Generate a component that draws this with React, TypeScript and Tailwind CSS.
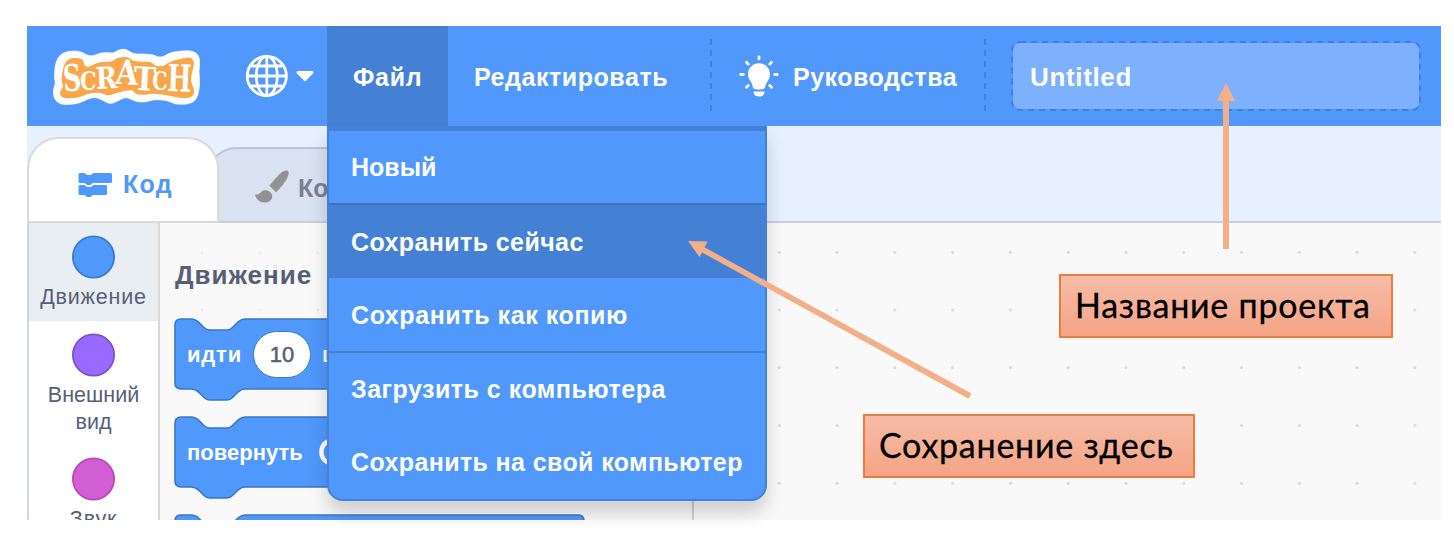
import React from "react";

const LETTERS = [
  { c: "S", x: 131, y: 209, w: 0.68, size: 110, r: -3 },
  { c: "C", x: 180, y: 205, w: 0.78, size: 80, r: 0 },
  { c: "R", x: 229, y: 202, w: 0.86, size: 90, r: -3 },
  { c: "A", x: 286, y: 186, w: 0.85, size: 102, r: 3 },
  { c: "T", x: 339, y: 204, w: 0.92, size: 98, r: 3 },
  { c: "C", x: 397, y: 205, w: 0.76, size: 76, r: 0 },
  { c: "H", x: 441, y: 208, w: 0.68, size: 112, r: 2 },
];

const OUTER: [number, number][] = [
  [104, 150], [107, 122], [120, 98], [145, 88], [180, 88], [200, 100], [218, 104], [238, 94], [262, 92], [280, 95],
  [294, 85], [315, 81], [332, 92], [345, 97], [395, 97], [412, 106], [430, 106], [450, 92], [490, 87], [520, 87],
  [537, 102], [540, 125], [536, 150], [540, 175], [537, 208], [528, 236], [505, 248], [465, 248], [447, 238], [420, 234],
  [400, 234], [375, 242], [345, 240], [322, 226], [303, 232], [283, 244], [265, 246], [247, 235], [225, 226], [203, 232],
  [180, 244], [150, 249], [120, 248], [102, 232], [99, 205], [107, 185], [103, 170],
];

const INNER: [number, number][] = [
  [127, 165], [133, 130], [145, 114], [165, 110], [188, 114], [190, 133], [205, 139], [225, 129], [245, 122], [278, 122],
  [288, 112], [310, 107], [330, 111], [338, 122], [392, 121], [405, 135], [432, 136], [450, 121], [480, 115], [508, 107],
  [521, 118], [517, 145], [510, 165], [513, 190], [523, 205], [516, 226], [480, 228], [450, 220], [420, 216], [395, 213],
  [375, 218], [348, 216], [338, 202], [310, 207], [285, 213], [265, 221], [245, 212], [225, 211], [200, 215], [180, 225],
  [155, 228], [126, 227], [120, 210], [133, 195], [127, 180],
];

function smooth(points: [number, number][]) {
  const n = points.length;
  const mid = (i: number) => {
    const a = points[i % n];
    const b = points[(i + 1) % n];
    return `${(a[0] + b[0]) / 2} ${(a[1] + b[1]) / 2}`;
  };
  return `M${mid(0)}` + points.map((_, i) => `Q${points[(i + 1) % n].join(" ")} ${mid(i + 1)}`).join("") + "z";
}

function Logo() {
  return (
    <svg className="ml-[26px] h-[57px] w-[147px] shrink-0" viewBox="99 79 441 171">
      <path fill="#fff" stroke="#fff" strokeWidth="2" d={smooth(OUTER)} />
      <path fill="#f9a74a" stroke="#f9a74a" strokeWidth="4" d={smooth(INNER)} />
      {LETTERS.map((l, i) => (
        <text
          key={i}
          transform={`translate(${l.x} ${l.y}) rotate(${l.r}) scale(${l.w} 1)`}
          fontFamily="'DejaVu Serif', serif"
          fontSize={l.size}
          fill="#fff"
        >
          {l.c}
        </text>
      ))}
    </svg>
  );
}

function Globe() {
  return (
    <svg className="ml-[45px] h-[43px] w-[43px] shrink-0" viewBox="0 0 43 43" fill="none" stroke="#fff" strokeWidth="2.800">
      <circle cx="21.800" cy="21" r="19.600" />
      <ellipse cx="21.800" cy="21" rx="10.500" ry="19.600" />
      <path d="M21.800 1.500v39M2 21h39M5.500 11h32M5.500 31h32" />
    </svg>
  );
}

function Bulb() {
  return (
    <svg className="h-[42px] w-[40px] shrink-0" viewBox="0 0 40 42" fill="#fff">
      <path d="M20 8.300c-6.200 0-11 4.800-11 10.900 0 3.800 1.900 6.200 3.500 8.700 1.400 2.300 1.100 4.600 2.200 5.700.9.900 2 .9 5.300.9s4.400 0 5.300-.9c1.100-1.100.8-3.400 2.200-5.700 1.600-2.500 3.500-4.900 3.500-8.700 0-6.100-4.800-10.900-11-10.900z" />
      <path d="M14.500 36.500h11c.3 3-1.800 5-5.500 5s-5.800-2-5.500-5z" />
      <path stroke="#fff" strokeWidth="2.800" strokeLinecap="round" d="M20 2v2M7.500 7.300l1.700 1.800M32.500 7.300l-1.700 1.800M1.800 19.500h2.500M35.700 19.500h2.500M7.500 32.200l1.700-1.700M32.500 32.200l-1.700-1.700" />
    </svg>
  );
}

function Divider() {
  return (
    <svg className="h-[74px] w-[2px] shrink-0" viewBox="0 0 2 74">
      <path d="M1 0v74" stroke="#4481d5" strokeWidth="2" strokeDasharray="6 5" />
    </svg>
  );
}

function Header() {
  return (
    <header className="flex h-[100px] shrink-0 items-center bg-[#5098fc] text-[25px] font-bold text-white">
      <Logo />
      <Globe />
      <svg className="ml-[7px] h-[12px] w-[20px] shrink-0" viewBox="0 0 20 12">
        <path d="M3 2.500h14l-7 7z" fill="#fff" stroke="#fff" strokeWidth="3" strokeLinejoin="round" />
      </svg>
      <div className="ml-[12px] flex h-full w-[121px] shrink-0 items-center bg-[#4481d5] pt-[4px] pl-[26px]">
        <span className="tracking-[0.7px]">Файл</span>
      </div>
      <div className="flex w-[262px] shrink-0 items-center pt-[4px] pl-[26px] tracking-[0.55px]">Редактировать</div>
      <Divider />
      <div className="flex w-[272px] shrink-0 items-center pl-[27px]">
        <Bulb />
        <span className="pt-[4px] pl-[14px] tracking-[0.5px]">Руководства</span>
      </div>
      <Divider />
      <div className="relative ml-[25px] flex h-[70px] w-[410px] shrink-0 items-center pt-[3px] pl-[19px] text-[26px] tracking-[0.65px]">
        <svg className="absolute inset-0 h-[70px] w-[410px]" viewBox="0 0 410 70">
          <rect x="1" y="1" width="408" height="68" rx="8" fill="#7db1fd" stroke="#5098fc" strokeWidth="2" />
          <rect x="1" y="1" width="408" height="68" rx="8" fill="none" stroke="#4481d5" strokeWidth="2" strokeDasharray="6 5" />
        </svg>
        <span className="relative">Untitled</span>
      </div>
    </header>
  );
}

function Tabs() {
  return (
    <div className="flex h-[97px] shrink-0 items-end border-b-2 border-[#c6cfde] bg-[#e6f0ff]">
      <div className="relative z-10 -mb-[2px] flex h-[86px] w-[192px] shrink-0 items-center rounded-t-[32px] border-2 border-[#dadada] bg-white pt-[9px] pl-[49px] text-[#5098fc]">
        <svg className="h-[26px] w-[35px]" viewBox="0 0 35 26" fill="#5098fc">
          <path d="M2 1h4c1.500 0 2 2 4 2h2c2 0 2.500-2 4-2h16.500q1.500 0 1.500 1.500v7q0 1.500-1.500 1.500H15.500c-1.500 0-2 2-4 2H10c-2 0-2.500-2-4-2H2q-1.500 0-1.500-1.500v-7Q.5 1 2 1z" />
          <path d="M2 13h4c1.500 0 2 2 4 2h2c2 0 2.500-2 4-2h11.500q1.500 0 1.500 1.500v7q0 1.500-1.500 1.500H15.500c-1.500 0-2 2-4 2H10c-2 0-2.500-2-4-2H2q-1.500 0-1.500-1.500v-7Q.5 13 2 13z" />
        </svg>
        <span className="pl-[10px] text-[25px] font-bold tracking-[1.3px]">Код</span>
      </div>
      <div className="-ml-[14px] flex h-[74px] w-[240px] shrink-0 items-center rounded-t-[32px] border-2 border-b-0 border-[#b9c4d6] bg-[#d9e2f1] pt-[5px] pl-[47px] text-[#7a8092]">
        <svg className="-mt-[3px] h-[35px] w-[36px]" viewBox="0 0 36 35" fill="#929292">
          <path d="M34 2c1.800 1.500 0 6-2.500 10-3 4.800-7 9-9.500 11.200l-6.500-6.500C18 13.500 23.500 6.500 27.500 3.500 30.500 1.500 33 1 34 2z" />
          <path d="M9.500 21.500c4-1.300 8.500 1.500 8.700 5.700.2 4.500-4.500 6.800-8.700 6.300C5.500 33 2.500 30 1.300 26.700c-.3-1.200.5-1.500 1.500-1.200 2.700.7 3-2.700 6.700-4z" />
        </svg>
        <span className="pt-[2px] pl-[8px] text-[25px] font-bold">Ко</span>
      </div>
    </div>
  );
}

type CategoryProps = { fill: string; stroke: string; children: React.ReactNode; className: string };

function Category({ fill, stroke, children, className }: CategoryProps) {
  return (
    <div className={`flex flex-col items-center text-center text-[21.5px] leading-[27px] ${className}`}>
      <svg className="h-[44px] w-[44px] shrink-0" viewBox="0 0 44 44">
        <circle cx="21.500" cy="22" r="20.600" fill={fill} stroke={stroke} strokeWidth="1.800" />
      </svg>
      <span className="mt-[5px]">{children}</span>
    </div>
  );
}

function Block({ width, children }: { width: number; children?: React.ReactNode }) {
  const w = width - 1;
  return (
    <div className="relative flex h-[98px] shrink-0 items-start">
      <svg className="absolute top-0 left-0 overflow-visible" width={width} height="84">
        <path
          d={`M1 7q0-6 6-6H17c4 0 6 1.500 8 3.500l5 5q2.500 2.500 5.500 2.500H53q3 0 5.500-2.500l5-5C66 2.500 67 1 71 1H${w - 6}q6 0 6 6V65q0 6-6 6H71c-4 0-5 1.500-7.500 3.500l-5 5q-2.500 2.500-5.500 2.500H35.500q-3 0-5.500-2.500l-5-5C23 72.500 21 71 17 71H7q-6 0-6-6z`}
          fill="#5098fc"
          stroke="#3a76c6"
          strokeWidth="1.600"
        />
      </svg>
      <div className="relative flex h-[72px] items-center pl-[13px] text-[22px] font-bold whitespace-nowrap text-white">{children}</div>
    </div>
  );
}

function Flyout() {
  return (
    <div className="relative w-[534px] shrink-0 border-r-2 border-[#cfcfcf] bg-[#f9f9f9] pl-[14px]">
      <svg className="absolute top-0 left-0 h-full w-full">
        {[42, 100, 158].map((x) => [30, 87].map((y) => <circle key={`${x}-${y}`} cx={x} cy={y} r="1.300" fill="#ececec" />))}
      </svg>
      <div className="relative flex h-[95px] items-center pt-[9px] pl-px text-[26px] font-bold tracking-[1px]">Движение</div>
      <Block width={340}>
        <span className="tracking-[0.8px]">идти</span>
        <span className="mx-[11px] flex h-[47px] w-[58px] items-center justify-center rounded-full border border-[#3a76c6] bg-white font-medium text-[#575e75] [-webkit-text-stroke:0.5px_#575e75]">
          10
        </span>
        <span>шагов</span>
      </Block>
      <Block width={430}>
        <span>повернуть</span>
        <svg className="ml-[14px] h-[32px] w-[32px]" viewBox="0 0 32 32" fill="none" stroke="#fff" strokeWidth="4.500">
          <path d="M16 28a12 12 0 1 1 12-9" />
        </svg>
      </Block>
      <Block width={411} />
    </div>
  );
}

function Workspace() {
  const xs = Array.from({ length: 12 }, (_, i) => 85.3 + i * 57.78);
  const ys = [29.3, 87, 144.7, 202.5, 260.3];
  return (
    <div className="grow bg-[#f9f9f9]">
      <svg className="h-full w-full">
        {xs.map((x) => ys.map((y) => <circle key={`${x}-${y}`} cx={x} cy={y} r="1.600" fill="#dcdcdc" />))}
      </svg>
    </div>
  );
}

function FileMenu() {
  return (
    <div className="absolute top-[126px] left-[327px] z-20 w-[440px] rounded-b-[16px] border-x-2 border-t-[5px] border-b-2 border-[#4481d5] bg-[#5098fc] text-[25px] font-bold whitespace-nowrap text-white shadow-[0_12px_18px_rgba(0,0,0,0.17)]">
      <div className="flex h-[72px] items-center pt-[2px] pl-[22px]">Новый</div>
      <div className="flex h-[75px] items-center border-t-2 border-[#3d73bd] bg-[#4481d5] pt-[2px] pl-[22px] tracking-[0.4px]">Сохранить сейчас</div>
      <div className="flex h-[73px] items-center pt-[2px] pl-[22px] tracking-[0.58px]">Сохранить как копию</div>
      <div className="flex h-[75px] items-center border-t-2 border-[#4481d5] pl-[22px] tracking-[0.5px]">Загрузить с компьютера</div>
      <div className="flex h-[73px] items-center pt-px pl-[22px] tracking-[0.38px]">Сохранить на свой компьютер</div>
    </div>
  );
}

const CALLOUT =
  "absolute z-30 flex h-[64px] items-center border-2 border-[#e97d3d] bg-linear-to-b from-[#f6bca7] to-[#f5a485] pl-[14px] pb-[3px] font-[Lato,'Open_Sans',sans-serif] text-[34px] tracking-[0.75px] whitespace-nowrap text-black [-webkit-text-stroke:0.3px_#000]";

export default function App() {
  return (
    <div className="relative h-[546px] w-[1454px] overflow-hidden bg-white pt-[26px] pl-[27px] font-['Liberation_Sans',Arial,sans-serif] text-[#575e75]">
      <div className="flex h-[494px] w-[1414px] flex-col overflow-hidden">
        <Header />
        <Tabs />
        <div className="flex min-h-0 grow">
          <div className="w-[133px] shrink-0 border-r-2 border-l-2 border-r-[#d9d9d9] border-l-[#ced5e5] bg-white">
            <Category fill="#5098fc" stroke="#3b79cb" className="h-[98px] bg-[#e9eef2] pt-[12px] tracking-[0.8px]">Движение</Category>
            <Category fill="#9a69ff" stroke="#7a53c9" className="h-[124px] pt-[12px]">
              Внешний
              <br />
              вид
            </Category>
            <Category fill="#d15fd3" stroke="#bb47bc" className="h-[98px] pt-[12px] tracking-[0.8px]">Звук</Category>
          </div>
          <Flyout />
          <Workspace />
        </div>
      </div>
      <FileMenu />
      <div className="absolute top-[520px] left-0 h-[26px] w-full bg-white" />
      <svg className="pointer-events-none absolute inset-0 z-30 h-[546px] w-[1454px]" fill="#f3af87">
        <path d="M1226 83l9.200 18H1229V249h-6V101h-6.200z" />
        <path d="M688 241l19.700.5-3.200 5.800L971.500 393.500l-3 5.300L702 252.400l-2.500 4.600z" />
      </svg>
      <div className={`${CALLOUT} top-[274px] left-[1059px] w-[334px]`}>Название проекта</div>
      <div className={`${CALLOUT} top-[414px] left-[863px] w-[332px]`}>Сохранение здесь</div>
    </div>
  );
}
